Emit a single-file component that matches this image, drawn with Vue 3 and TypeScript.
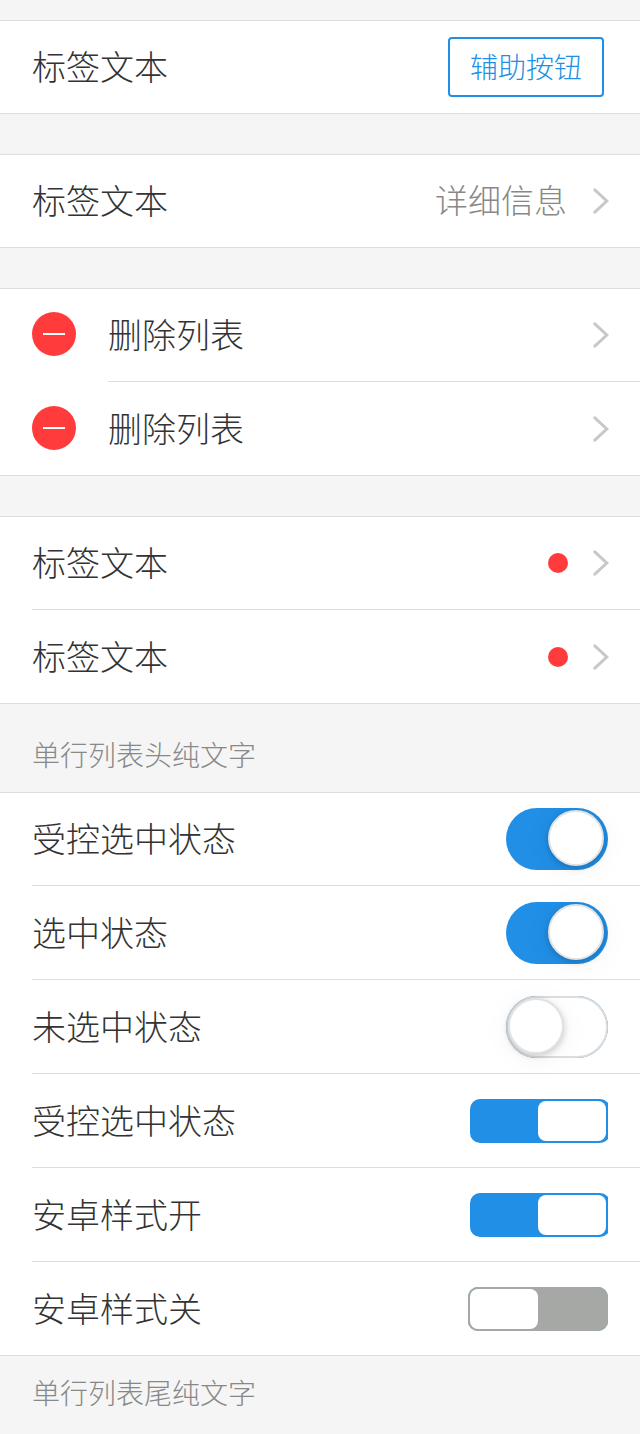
<script setup lang="ts">
interface Row {
  label: string
  kind: 'button' | 'detail' | 'delete' | 'dot' | 'ios' | 'android'
  on?: boolean
}
interface Group {
  name: string
  rows: Row[]
}
const groups: Group[] = [
  { name: 'first', rows: [{ label: '标签文本', kind: 'button' }] },
  { name: 'plain', rows: [{ label: '标签文本', kind: 'detail' }] },
  { name: 'plain', rows: [{ label: '删除列表', kind: 'delete' }, { label: '删除列表', kind: 'delete' }] },
  { name: 'plain', rows: [{ label: '标签文本', kind: 'dot' }, { label: '标签文本', kind: 'dot' }] },
]
const switches: Row[] = [
  { label: '受控选中状态', kind: 'ios', on: true },
  { label: '选中状态', kind: 'ios', on: true },
  { label: '未选中状态', kind: 'ios', on: false },
  { label: '受控选中状态', kind: 'android', on: true },
  { label: '安卓样式开', kind: 'android', on: true },
  { label: '安卓样式关', kind: 'android', on: false },
]
</script>

<template>
  <main class="page">
    <section v-for="(group, g) in groups" :key="g" class="list" :class="group.name">
      <div v-for="(row, i) in group.rows" :key="i" class="row">
        <span v-if="row.kind === 'delete'" class="remove"></span>
        <div class="content">
          <span class="label">{{ row.label }}</span>
          <button v-if="row.kind === 'button'" class="action">辅助按钮</button>
          <span v-if="row.kind === 'detail'" class="detail">详细信息</span>
          <span v-if="row.kind === 'dot'" class="dot"></span>
          <svg v-if="row.kind !== 'button'" class="arrow" viewBox="0 0 18 28">
            <path d="M2.8 2.8 L14.8 14 L2.8 25.2" fill="none" stroke="#c8c8c8" stroke-width="3" stroke-linecap="round" />
          </svg>
        </div>
      </div>
    </section>
    <header class="caption head">单行列表头纯文字</header>
    <section class="list">
      <div v-for="(row, i) in switches" :key="i" class="row">
        <div class="content">
          <span class="label">{{ row.label }}</span>
          <span class="switch" :class="[row.kind, row.on ? 'on' : 'off']"><i class="knob"></i></span>
        </div>
      </div>
    </section>
    <footer class="caption foot">单行列表尾纯文字</footer>
  </main>
</template>

<style>
body { background: #f5f5f5; }
</style>

<style scoped>
.page {
  box-sizing: border-box;
  height: 1434px;
  overflow: hidden;
  padding-top: 20px;
  background: #f5f5f5;
  color: #333;
  font-family: "Noto Sans CJK SC", sans-serif;
  font-weight: 300;
}
.list { background: #fff; border-top: 1px solid #ddd; border-bottom: 1px solid #ddd; }
.plain { margin-top: 40px; }
.row { display: flex; align-items: stretch; height: 94px; padding-left: 32px; }
.row:first-child { height: 92px; }
.content { box-sizing: border-box; flex: 1; display: flex; align-items: center; padding: 1px 32px 0 0; border-top: 1px solid #ddd; }
.row:first-child .content { border-top: 0; padding-top: 0; }
.label { flex: 1; font-size: 34px; line-height: 50px; padding-bottom: 2px; }
.action { box-sizing: border-box; width: 156px; height: 60px; margin-right: 4px; padding: 0 0 2px; border: 2px solid #218fe6; border-radius: 4px; background: #fff; color: #218fe6; font: inherit; font-size: 28px; line-height: 52px; }
.detail { color: #888; font-size: 33px; line-height: 48px; margin-right: 25px; padding-bottom: 4px; }
.arrow { width: 18px; height: 28px; margin-right: -2px; }
.remove { width: 44px; height: 44px; margin: 0 32px 25px 0; align-self: flex-end; border-radius: 50%; background: #ff3b3b; display: flex; align-items: center; justify-content: center; }
.remove::before { content: ""; width: 22px; height: 2px; background: #fff; }
.dot { width: 20px; height: 20px; border-radius: 50%; margin-right: 24px; background: #ff3b3b; }
.caption { padding-left: 32px; color: #888; font-size: 28px; line-height: 42px; }
.head { padding-top: 29px; height: 59px; }
.foot { padding-top: 15px; }
.switch { box-sizing: border-box; position: relative; display: flex; padding: 2px; background: #218fe6; }
.knob { position: relative; box-sizing: border-box; background: #fff; }
.on { justify-content: flex-end; padding-right: 4px; }
.off::before { content: ""; position: absolute; inset: 0; box-sizing: border-box; border-radius: inherit; }
.ios { width: 102px; height: 62px; border-radius: 31px; }
.ios.off::before { border: 2px solid #ddd; background: #fff; }
.ios .knob { width: 56px; height: 56px; border-radius: 50%; border: 2px solid #e2e2e2; box-shadow: 0 2px 6px rgba(0, 0, 0, .2), 0 4px 30px rgba(0, 0, 0, .05); }
.android { width: 140px; height: 44px; border-radius: 10px; }
.android.on { margin-right: -2px; clip-path: inset(0 2px 0 0); }
.android.off::before { background: #a6a8a6; }
.android .knob { width: 68px; height: 40px; border-radius: 8px; }
</style>
